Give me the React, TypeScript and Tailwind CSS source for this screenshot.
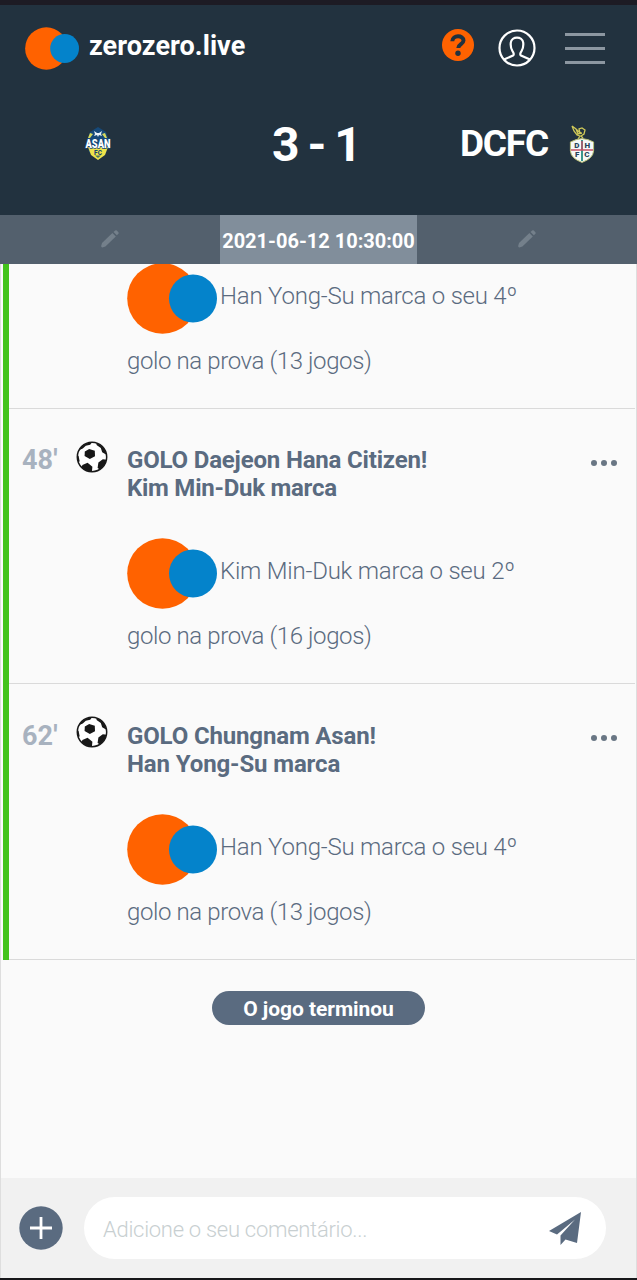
import React from "react";

type Goal = { minute: string; title: string[]; lead: string; rest: string; titleCls: string[] };

const HAN: Goal = {
  minute: "62'",
  title: ["GOLO Chungnam Asan!", "Han Yong-Su marca"],
  lead: "Han Yong-Su marca o seu 4º",
  rest: "golo na prova (13 jogos)",
  titleCls: ["tracking-[-0.15px]", "tracking-[-0.12px]"],
};

const KIM: Goal = {
  minute: "48'",
  title: ["GOLO Daejeon Hana Citizen!", "Kim Min-Duk marca"],
  lead: "Kim Min-Duk marca o seu 2º",
  rest: "golo na prova (16 jogos)",
  titleCls: ["tracking-[-0.18px]", "tracking-[-0.25px]"],
};

function Brand({ className }: { className: string }) {
  return (
    <svg viewBox="0 0 90 71" className={className}>
      <circle cx="35.5" cy="35.5" r="35.3" fill="#ff6200" />
      <circle cx="66" cy="35.5" r="24" fill="#0483cb" />
    </svg>
  );
}

function Ball() {
  return (
    <svg viewBox="0 0 32 32" className="h-8 w-8">
      <defs>
        <clipPath id="ball">
          <circle cx="16" cy="16" r="14.6" />
        </clipPath>
      </defs>
      <circle cx="16" cy="16" r="14.6" fill="#fff" />
      <g clipPath="url(#ball)" fill="#181818">
        <path d="M13.2 8L18.8 9.8L19 15.2L13.8 18L8.6 15L8.8 10.4Z" />
        <path d="M8 0L17 0L14.2 3.8L9.8 4.8L6.8 7.6L2 9.5L1 6Z" />
        <path d="M20 0L31 8L30 13.5L26.2 11.2L24.8 7L20.6 4Z" />
        <path d="M22.4 21.4L26.8 18.2L32 19L30 26L25.5 29.5L21.6 27Z" />
        <path d="M6.4 24L11.6 21.8L16.4 25.8L15.8 32H9L5 28Z" />
        <path d="M0 13L2.6 15L3.6 20L2 23Z" />
      </g>
      <circle cx="16" cy="16" r="14.7" fill="none" stroke="#181818" strokeWidth="1.5" />
    </svg>
  );
}

function Pencil() {
  return (
    <svg viewBox="0 0 20 20" className="h-5 w-5 fill-[#74808b]">
      <path d="M2 14L12.4 4L15.8 7.4L5.4 17.6L2.4 18.4Q1 18.4 1.2 17Z" />
      <path d="M13.5 3L15.2 1.5Q16 1 16.8 1.6L18.4 3.2Q19 4 18.4 4.8L16.9 6.3Z" />
    </svg>
  );
}

function Details({ goal }: { goal: Goal }) {
  return (
    <>
      <div className="flex h-[71px] shrink-0 font-light leading-[66px]">
        <Brand className="h-[71px] w-[90px] shrink-0" />
        <span className="ml-[3px] tracking-[-0.22px]">{goal.lead}</span>
      </div>
      <p className="h-[54px] shrink-0 font-light leading-[54px] tracking-[-0.39px]">{goal.rest}</p>
    </>
  );
}

function Event({ goal, tall }: { goal: Goal; tall?: boolean }) {
  return (
    <article className={`flex w-full shrink-0 text-[#5a6b80] ${tall ? "h-[276px]" : "h-[275px]"}`}>
      <div className="w-1.5 shrink-0 bg-[#43c31c]" />
      <div className={`flex min-w-0 flex-1 border-b border-[#dadada] ${tall ? "pt-px" : ""}`}>
        <div className="w-[67px] shrink-0 pl-[13px] pt-[35px] text-[27px] font-bold leading-8 tracking-[0.1px] text-[#a8b2bf]">
          {goal.minute}
        </div>
        <div className={`w-[51px] shrink-0 ${tall ? "pt-[31px]" : "pt-8"}`}>
          <Ball />
        </div>
        <div className="min-w-0 flex-1 whitespace-nowrap pt-[37px] text-2xl">
          {goal.title.map((line, i) => (
            <h2 key={line} className={`h-7 font-bold leading-7 ${goal.titleCls[i]}`}>{line}</h2>
          ))}
          <div className="mt-9">
            <Details goal={goal} />
          </div>
        </div>
        <div className={`flex h-[7px] w-11 shrink-0 gap-[4px] ${tall ? "mt-[50px]" : "mt-[51px]"}`}>
          <i className="size-[6px] rounded-full bg-[#697684]" />
          <i className="size-[6px] rounded-full bg-[#697684]" />
          <i className="size-[6px] rounded-full bg-[#697684]" />
        </div>
      </div>
    </article>
  );
}

function Asan() {
  return (
    <svg viewBox="0 0 28 34" className="h-[34px] w-7 overflow-visible">
      <path d="M6 5L14 0L22 5L25 14L22 26L14 33L5 25L3 14Z" fill="#164979" />
      <path d="M6 6L9 7L6 11L4 11ZM21 6L18 7L21 11L23 11Z" fill="#d8d95b" />
      <path d="M10 4L13 6H15L18 4L17 7L18 9L15 8L14 10L13 8L10 9L11 7Z" fill="#e8f2fa" />
      <path d="M4 20H24L21 28L14 33L7 28Z" fill="#eee34a" />
      <text x="1.5" y="20.8" textLength="25" lengthAdjust="spacingAndGlyphs" fontSize="13" fontWeight="900" fill="#fff" stroke="#164979" strokeWidth="1.4" paintOrder="stroke">ASAN</text>
      <text x="14" y="27.6" textAnchor="middle" fontSize="6.5" fontWeight="800" fill="#17466f">FC</text>
      <path d="M11 28.5H17L14 31Z" fill="#4a7360" />
    </svg>
  );
}

function Daejeon() {
  return (
    <svg viewBox="0 0 28 38" className="h-[38px] w-7">
      <path d="M4 1L8 4L12 8L11 4L14 3L17 5L16 9L13 11L15 13M4 1L6 6L9 10L12 11L10 14M8 4L10 9L14 8" fill="none" stroke="#d0c958" strokeWidth="1.3" />
      <path d="M14 13.6Q20 14 25.6 17V26Q25 33.5 14 37.4Q3 33.5 2.4 26V17Q8 14 14 13.6Z" fill="#f6f9f7" stroke="#b9bf74" />
      <path d="M14 15V36" stroke="#268b80" strokeWidth="1.8" />
      <path d="M3 25H25M14 16V25" stroke="#c45167" strokeWidth="1.4" />
      <g fill="#28465c" fontSize="8" fontWeight="900" textAnchor="middle">
        <text x="8.8" y="23.2">D</text>
        <text x="19.4" y="23.2">H</text>
        <text x="9.3" y="32.4">F</text>
        <text x="18.8" y="32.4">C</text>
      </g>
    </svg>
  );
}

export default function App() {
  return (
    <div className="flex h-[1280px] w-[637px] flex-col overflow-hidden bg-[#fafafa] font-['Roboto','Liberation_Sans',sans-serif]">
      <div className="h-[5px] shrink-0 bg-[#1d1b24]" />
      <header className="h-[210px] shrink-0 bg-[#22323f] text-white">
        <div className="flex h-[86px] items-center pl-[25px] pr-8">
          <Brand className="h-[43px] w-[54px]" />
          <span className="-mt-[4px] ml-[10px] flex-1 text-[27px] font-bold tracking-[0.05px]">zerozero.live</span>
          <svg viewBox="0 0 32 32" className="-mt-[6px] size-8">
            <circle cx="16" cy="16" r="16" fill="#ff6200" />
            <path d="M10.3 12.2C10.5 5.6 21.6 6 21.5 11.5C21.4 15.3 16.5 15 16.3 19" fill="none" stroke="#22323f" strokeWidth="4" />
            <circle cx="16" cy="24.3" r="2.7" fill="#22323f" />
          </svg>
          <svg viewBox="0 0 38 38" className="ml-[24px] size-[38px]" fill="none" stroke="#fff" strokeWidth="2.2">
            <circle cx="19" cy="19" r="17.5" />
            <path d="M6 30.5L15 26.5Q16.7 25.4 14.5 22.2C12.8 19.5 12.5 16.2 12.8 13.5C13.5 7 24.5 7 25.2 13.5C25.5 16.2 25.2 19.5 23.5 22.2Q21.3 25.4 23 26.5L32 30.5" />
          </svg>
          <div className="ml-[29px] flex h-[31px] w-10 flex-col justify-between">
            <i className="h-[3px] bg-[#8c97a1]" />
            <i className="h-[3px] bg-[#8c97a1]" />
            <i className="h-[3px] bg-[#8c97a1]" />
          </div>
        </div>
        <div className="flex h-28 items-start font-bold">
          <div className="w-[272px] pl-[84px] pt-9"><Asan /></div>
          <div className="w-[188px] whitespace-nowrap pt-[27px] text-[48px] leading-[54px] tracking-[-2px]">3 - 1</div>
          <div className="w-[108px] pt-[30px] text-[37px] leading-[46px] tracking-[-1.2px]">DCFC</div>
          <div className="pt-[34px]"><Daejeon /></div>
        </div>
      </header>
      <div className="flex h-[49px] shrink-0 bg-[#53606d]">
        <div className="flex w-[220px] justify-center pt-[14px]"><Pencil /></div>
        <time className="flex w-[197px] items-center justify-center whitespace-nowrap bg-[#818e9b] pt-[2px] text-xl font-bold text-white">2021-06-12 10:30:00</time>
        <div className="flex flex-1 justify-center pt-[14px]"><Pencil /></div>
      </div>
      <main className="flex h-[914px] shrink-0 flex-col border-x border-[#dedede] pl-[2px] pr-px">
        <article className="flex h-[145px] shrink-0 text-[#5a6b80]">
          <div className="w-1.5 shrink-0 bg-[#43c31c]" />
          <div className="flex flex-1 flex-col justify-end overflow-hidden whitespace-nowrap border-b border-[#dadada] pb-5 pl-[118px] text-2xl">
            <Details goal={HAN} />
          </div>
        </article>
        <Event goal={KIM} />
        <Event goal={HAN} tall />
        <div className="ml-[209px] mt-[31px] flex h-[34px] w-[213px] items-center justify-center rounded-full bg-[#5a6b80] pt-[3px] text-[21px] font-bold tracking-[-0.05px] text-white">O jogo terminou</div>
      </main>
      <footer className="flex h-[100px] shrink-0 items-start border-x border-[#dedede] bg-[#f1f1f1] pl-[18px] pt-[19px]">
        <svg viewBox="0 0 44 44" className="mt-[9px] size-11">
          <circle cx="22" cy="22" r="21.7" fill="#5a6b80" />
          <path d="M11 22H33M22 11V33" stroke="#fff" strokeWidth="2.8" />
        </svg>
        <div className="ml-[21px] flex h-[62px] w-[522px] items-center rounded-full bg-white pl-[19px] pr-6">
          <span className="flex-1 whitespace-nowrap pt-[3px] text-[22px] font-light tracking-[-0.28px] text-[#c8cfd1]">Adicione o seu comentário...</span>
          <svg viewBox="0 0 33 33" className="h-[33px] w-[33px] fill-[#5a6b80]">
            <path d="M32 0L0 19L8 22.5L26 7.5L11.5 23.5V33L16.5 27.5L28 31Z" />
          </svg>
        </div>
      </footer>
      <div className="h-[2px] bg-[#17171a]" />
    </div>
  );
}
